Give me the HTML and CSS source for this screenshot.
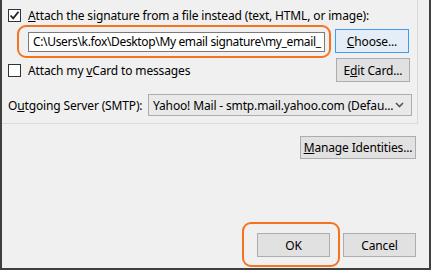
FILE: index.html
```html
<!DOCTYPE html>
<html>
<head>
<meta charset="utf-8">
<link rel="stylesheet" href="styles.css">
</head>
<body>
<div class="window">
  <div class="panel">
    <div class="row row-check1">
      <span class="cb checked"><svg width="11" height="11" viewBox="0 0 11 11"><path d="M1.5 5.5 L4.2 8.3 L9.5 1.8" fill="none" stroke="#222" stroke-width="1.8"/></svg></span>
      <span class="lbl"><u>A</u>ttach the signature from a file instead (text, HTML, or image):</span>
    </div>
    <div class="row row-file">
      <div class="file-wrap">
        <div class="input">C:\Users\k.fox\Desktop\My email signature\my_email_</div>
        <div class="hl hl-input"></div>
      </div>
      <button class="btn btn-choose focus"><span><u>C</u>hoose...</span></button>
    </div>
    <div class="row row-vcard">
      <span class="cb"></span>
      <span class="lbl">Attach my <u>v</u>Card to messages</span>
      <button class="btn btn-edit"><span>E<u>d</u>it Card...</span></button>
    </div>
    <div class="row row-smtp">
      <span class="lbl smtp-lbl">O<u>u</u>tgoing Server (SMTP):</span>
      <div class="select">
        <span class="sel-text">Yahoo! Mail - smtp.mail.yahoo.com (Defau...</span>
        <svg class="chev" width="9" height="6" viewBox="0 0 9 6"><path d="M1 1 L4.5 4.5 L8 1" fill="none" stroke="#555" stroke-width="1.6"/></svg>
      </div>
    </div>
  </div>
  <div class="manage-row">
    <button class="btn btn-manage"><span><u>M</u>anage Identities...</span></button>
  </div>
  <div class="footer">
    <div class="ok-wrap">
      <button class="btn btn-ok">OK</button>
      <div class="hl hl-ok"></div>
    </div>
    <button class="btn btn-cancel">Cancel</button>
  </div>
</div>
</body>
</html>
```

FILE: styles.css
```css
html, body {
  margin: 0;
  padding: 0;
  background: #f0f0f0;
}
body {
  width: 431px;
  height: 270px;
  overflow: hidden;
  font-family: "Noto Sans", "Open Sans", sans-serif;
  font-size: 12px;
  letter-spacing: -0.15px;
  color: #000;
}
.window {
  box-sizing: border-box;
  width: 431px;
  height: 270px;
  border-left: 2px solid #3f3f3f;
  border-right: 2px solid #3f3f3f;
  border-bottom: 2px solid #3f3f3f;
  display: flex;
  flex-direction: column;
}
.panel {
  box-sizing: border-box;
  width: 416px;
  height: 124px;
  border-right: 1px solid #dadada;
  border-bottom: 1px solid #dadada;
  padding-left: 6px;
  display: flex;
  flex-direction: column;
}
.row {
  display: flex;
  align-items: center;
  position: relative;
}
.row-check1 {
  margin-top: 9px;
  height: 13px;
}
.cb {
  box-sizing: border-box;
  width: 13px;
  height: 13px;
  border: 1px solid #333;
  background: #fff;
  display: flex;
  align-items: center;
  justify-content: center;
  flex: none;
}
.lbl {
  margin-left: 7px;
  white-space: nowrap;
  line-height: 13px;
}
.row-file {
  margin-top: 7px;
  height: 24px;
}
.file-wrap {
  position: relative;
  margin-left: 20px;
  width: 297px;
  height: 20px;
  margin-top: 2px;
}
.input {
  box-sizing: border-box;
  width: 297px;
  height: 20px;
  border: 1px solid #7a7a7a;
  background: #fff;
  padding-left: 4px;
  line-height: 18px;
  letter-spacing: -0.35px;
  white-space: nowrap;
  overflow: hidden;
}
.hl {
  position: absolute;
  border: 2.5px solid #f5731f;
  border-radius: 9px;
  pointer-events: none;
}
.hl-input {
  left: -11px;
  top: -7px;
  right: -6px;
  bottom: -6px;
}
.btn {
  box-sizing: border-box;
  font-family: inherit;
  font-size: 12px;
  letter-spacing: -0.15px;
  color: #000;
  background: #e1e1e1;
  border: 1px solid #adadad;
  border-radius: 0;
  padding: 0;
  margin: 0;
  display: flex;
  align-items: center;
  justify-content: center;
  white-space: nowrap;
}
.btn-choose {
  margin-left: 10px;
  width: 74px;
  height: 24px;
}
.btn.focus {
  border-color: #3c9df2;
  background: #e5eef7;
}
.row-vcard {
  margin-top: 5px;
  height: 24px;
}
.btn-edit {
  margin-left: auto;
  margin-right: 7px;
  width: 74px;
  height: 24px;
}
.row-smtp {
  margin-top: 12px;
  height: 22px;
}
.smtp-lbl {
  margin-left: 0;
}
.select {
  box-sizing: border-box;
  margin-left: auto;
  margin-right: 5px;
  width: 264px;
  height: 22px;
  border: 1px solid #acacac;
  background: #e9e9e9;
  display: flex;
  align-items: center;
  padding-left: 4px;
  padding-right: 7px;
}
.sel-text {
  white-space: nowrap;
  flex: 1;
}
.chev {
  flex: none;
}
.manage-row {
  display: flex;
  justify-content: flex-end;
  padding-right: 13px;
  margin-top: 12px;
}
.btn-manage {
  width: 116px;
  height: 23px;
}
.footer {
  margin-top: auto;
  display: flex;
  justify-content: flex-end;
  gap: 13px;
  padding-right: 13px;
  margin-bottom: 11px;
}
.ok-wrap {
  position: relative;
}
.btn-ok, .btn-cancel {
  width: 73px;
  height: 24px;
}
.hl-ok {
  left: -15px;
  top: -11px;
  right: -10px;
  bottom: -10px;
}
```
